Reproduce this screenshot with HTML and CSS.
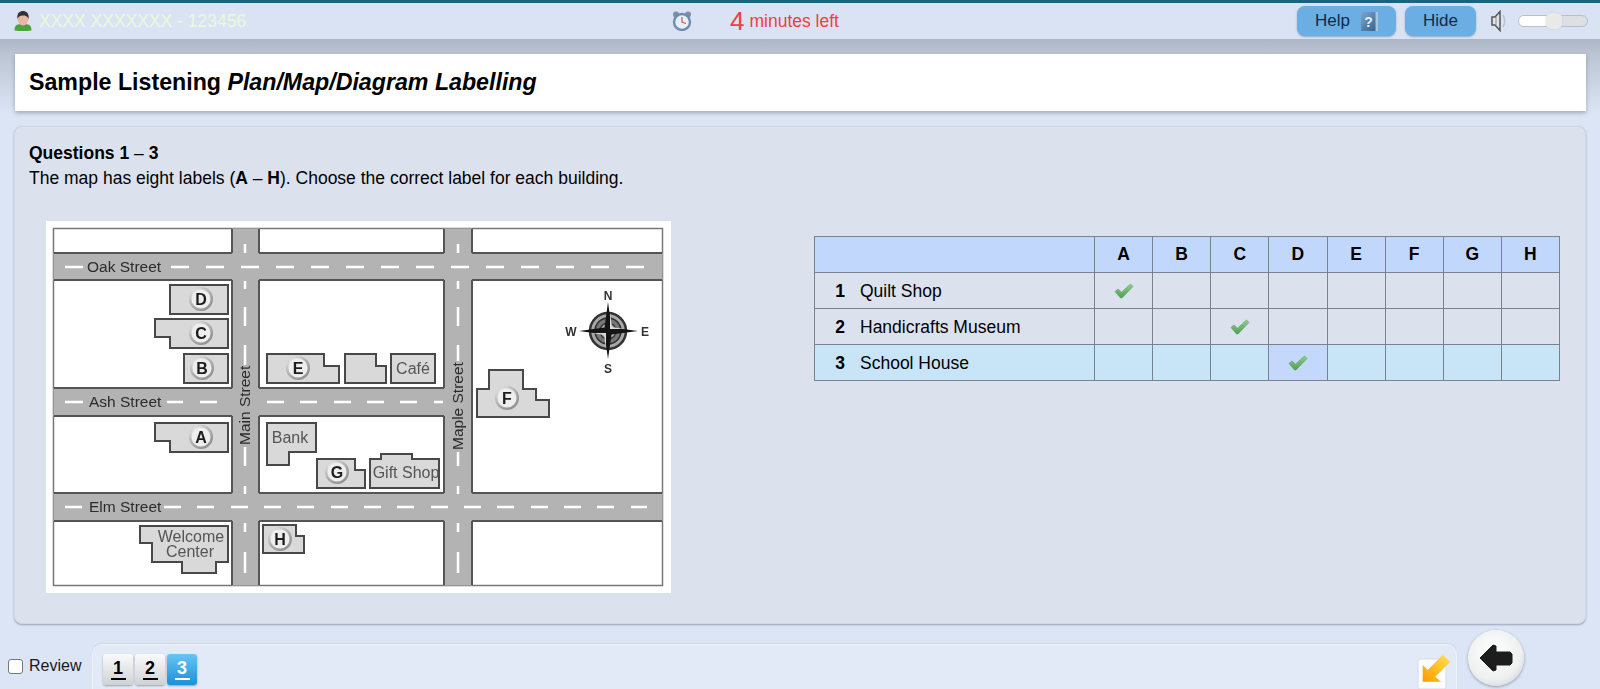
FILE: index.html
```html
<!DOCTYPE html>
<html lang="en">
<head>
<meta charset="utf-8">
<title>Sample Listening</title>
<link rel="stylesheet" href="styles.css">
</head>
<body>
<svg class="defs" width="0" height="0" aria-hidden="true">
  <defs>
    <radialGradient id="ring" cx="0.35" cy="0.3" r="0.9"><stop offset="0" stop-color="#fafafa"/><stop offset="1" stop-color="#777"/></radialGradient>
    <linearGradient id="tick" x1="0" y1="0" x2="0" y2="1"><stop offset="0" stop-color="#8fd08a"/><stop offset="1" stop-color="#4fa155"/></linearGradient>
    <linearGradient id="book" x1="0" y1="0" x2="1" y2="1"><stop offset="0" stop-color="#7fa6cc"/><stop offset="1" stop-color="#2f5f8e"/></linearGradient>
    <linearGradient id="pen" x1="1" y1="0" x2="0" y2="1"><stop offset="0" stop-color="#ffe34d"/><stop offset="1" stop-color="#ff9a00"/></linearGradient>
    <symbol id="check" viewBox="0 0 20 16"><path d="M1 8.500 4 6 7.500 9.200 16.500 1 19 3.500 8 15 6.500 15Z" fill="url(#tick)" stroke="#5c9a62" stroke-width=".6"/></symbol>
  </defs>
</svg>

<header class="topbar">
  <div class="user">
    <svg class="user-icon" viewBox="0 0 18 20"><path d="M0.500 19.500c0-6 3-6.500 8.500-6.500s8.500 .5 8.500 6.500q-8.500 1-17 0Z" fill="#4ba23a"/><ellipse cx="9" cy="8" rx="5.500" ry="6.500" fill="#e6b8a2"/><path d="M3.500 8C2.500 2 6 0 9 0S15.500 2 14.500 8C13.500 5 11 4.500 9 4.500S4.500 5 3.500 8Z" fill="#333"/></svg>
    <span>XXXX XXXXXXX - 123456</span>
  </div>
  <div class="timer">
    <svg class="clock" viewBox="0 0 20 20"><circle cx="4" cy="3.500" r="3" fill="#7e8fa8"/><circle cx="16" cy="3.500" r="3" fill="#7e8fa8"/><circle cx="10" cy="11" r="8" fill="#e6eef8" stroke="#6f8bb0" stroke-width="2.400"/><path d="M10 6V11L14 12.500" fill="none" stroke="#d9534f" stroke-width="1.200"/></svg>
    <span class="timer-num">4</span>
    <span class="timer-text">minutes left</span>
  </div>
  <div class="controls">
    <button class="tool-btn help-btn" type="button">Help
      <svg class="help-icon" viewBox="0 0 17 19"><rect width="17" height="19" fill="url(#book)"/><rect x="14.500" width="2.500" height="19" fill="#a9c4de"/><text x="7.500" y="15" class="help-mark">?</text></svg>
    </button>
    <button class="tool-btn hide-btn" type="button">Hide</button>
    <svg class="speaker" viewBox="0 0 18 22"><path d="M2 7H5L10 1.500V20.500L5 15H2Z" fill="#e2e5ea" stroke="#555" stroke-width="1.500"/><path d="M6 7V15" stroke="#888"/><path d="M13 5q3.500 6 0 12" fill="none" stroke="#bfc4cc" stroke-width="1.500"/></svg>
    <div class="slider"><span class="slider-fill"></span><span class="slider-thumb"></span></div>
  </div>
</header>

<main class="main">
  <h1 class="title">Sample Listening <em>Plan/Map/Diagram Labelling</em></h1>

  <section class="panel">
    <p class="q-head">Questions 1 <span class="thin">–</span> 3</p>
    <p class="q-text">The map has eight labels (<b>A</b> – <b>H</b>). Choose the correct label for each building.</p>
    <div class="q-body">
      <svg class="map" viewBox="0 0 625 372" width="625" height="372">
        <rect class="paper" width="625" height="372"/>
        <rect class="frame" x="7.500" y="7.500" width="609" height="357"/>
        <g class="road">
          <rect x="7.500" y="32" width="609" height="27"/>
          <rect x="7.500" y="167" width="392" height="28"/>
          <rect x="7.500" y="272" width="609" height="28"/>
          <rect x="186" y="7.500" width="27" height="357"/>
          <rect x="398" y="7.500" width="28" height="357"/>
        </g>
        <path class="edge" d="M8 32H186M213 32H398M426 32H616M8 59H186M213 59H398M426 59H616M8 167H186M213 167H398M8 195H186M213 195H398M8 272H186M213 272H398M426 272H616M8 300H186M213 300H398M426 300H616M186 8V32M186 59V167M186 195V272M186 300V364M213 8V32M213 59V167M213 195V272M213 300V364M398 8V32M398 59V167M398 195V272M398 300V364M426 8V32M426 59V272M426 300V364"/>
        <path class="dash" d="M19 46H37M125 46H143M160 46H178M195 46H213M230 46H248M265 46H283M300 46H318M335 46H353M370 46H388M405 46H423M440 46H458M475 46H493M510 46H528M545 46H563M580 46H598"/>
        <path class="dash" d="M19 181H37M121 181H137M154 181H171M221 181H238M254 181H271M288 181H305M321 181H338M354 181H371M388 181H397"/>
        <path class="dash" d="M19 286H36M118 286H135M151 286H168M185 286H202M218 286H235M251 286H268M285 286H302M318 286H335M351 286H368M385 286H402M418 286H435M451 286H468M485 286H502M518 286H535M551 286H568M585 286H601"/>
        <path class="dash" d="M199 23V32M199 60V68M199 86V105M199 124V144M199 226V245M199 265V273M199 302V311M199 331V352"/>
        <path class="dash" d="M412 23V32M412 60V68M412 86V105M412 124V140M412 231V245M412 265V273M412 302V311M412 331V352"/>
        <g class="street">
          <text x="41" y="51">Oak Street</text>
          <text x="43" y="186">Ash Street</text>
          <text x="43" y="291">Elm Street</text>
          <text x="204" y="224" transform="rotate(-90 204 224)">Main Street</text>
          <text x="417" y="229" transform="rotate(-90 417 229)">Maple Street</text>
        </g>
        <g class="bldg">
          <path d="M124 64H182V93H124Z"/>
          <path d="M109 98H182V127H124V116H109Z"/>
          <path d="M138 133H182V162H138Z"/>
          <path d="M221 133H278V145H293V162H221Z"/>
          <path d="M299 133H330V145H340V162H299Z"/>
          <path d="M345 133H389V162H345Z"/>
          <path d="M443 149H477V168H490V179H503V196H431V168H443Z"/>
          <path d="M109 202H182V231H124V220H109Z"/>
          <path d="M221 202H270V231H243V244H221Z"/>
          <path d="M271 238H309V249H319V267H271Z"/>
          <path d="M324 238H335V233H366V238H393V267H324Z"/>
          <path d="M94 305H182V341H170V352H136V341H106V322H94Z"/>
          <path d="M217 304H250V315H258V332H217Z"/>
        </g>
        <g class="bname">
          <text x="367" y="153">Café</text>
          <text x="244" y="222">Bank</text>
          <text x="360" y="257">Gift Shop</text>
          <text x="145" y="321">Welcome</text>
          <text x="144" y="336">Center</text>
        </g>
        <g class="pins">
          <circle cx="155" cy="78" r="12"/><circle cx="155" cy="112" r="12"/><circle cx="156" cy="147" r="12"/><circle cx="252" cy="147" r="12"/><circle cx="461" cy="177" r="12"/><circle cx="155" cy="216" r="12"/><circle cx="291" cy="251" r="12"/><circle cx="234" cy="318" r="12"/>
        </g>
        <g class="pins-in">
          <circle cx="155" cy="78" r="9.500"/><circle cx="155" cy="112" r="9.500"/><circle cx="156" cy="147" r="9.500"/><circle cx="252" cy="147" r="9.500"/><circle cx="461" cy="177" r="9.500"/><circle cx="155" cy="216" r="9.500"/><circle cx="291" cy="251" r="9.500"/><circle cx="234" cy="318" r="9.500"/>
        </g>
        <g class="pin-label">
          <text x="155" y="84">D</text><text x="155" y="118">C</text><text x="156" y="153">B</text><text x="252" y="153">E</text><text x="461" y="183">F</text><text x="155" y="222">A</text><text x="291" y="257">G</text><text x="234" y="324">H</text>
        </g>
        <g class="compass">
          <circle class="c-disc" cx="562" cy="110" r="18"/>
          <circle class="c-ring" cx="562" cy="110" r="13"/>
          <circle class="c-ring2" cx="562" cy="110" r="8"/>
          <path class="c-star" d="M562 81 565.500 106.500 592 110 565.500 113.500 562 138 558.500 113.500 533 110 558.500 106.500Z"/>
          <path class="c-light" d="M564 108V92L566 106 578 108ZM560 112V128L558 114 546 112Z"/>
          <text x="562" y="78.500">N</text>
          <text x="562" y="151.500">S</text>
          <text x="525" y="114.500">W</text>
          <text x="599" y="114.500">E</text>
        </g>
      </svg>

      <table class="grid">
        <thead>
          <tr><th class="name-col"></th><th>A</th><th>B</th><th>C</th><th>D</th><th>E</th><th>F</th><th>G</th><th>H</th></tr>
        </thead>
        <tbody>
          <tr>
            <td class="name-col"><b>1</b>Quilt Shop</td>
            <td><svg class="tick"><use href="#check"/></svg></td><td></td><td></td><td></td><td></td><td></td><td></td><td></td>
          </tr>
          <tr>
            <td class="name-col"><b>2</b>Handicrafts Museum</td>
            <td></td><td></td><td><svg class="tick"><use href="#check"/></svg></td><td></td><td></td><td></td><td></td><td></td>
          </tr>
          <tr class="current">
            <td class="name-col"><b>3</b>School House</td>
            <td></td><td></td><td></td><td class="picked"><svg class="tick"><use href="#check"/></svg></td><td></td><td></td><td></td><td></td>
          </tr>
        </tbody>
      </table>
    </div>
  </section>

  <footer class="bottom">
    <label class="review"><span class="box"></span>Review</label>
    <nav class="nav">
      <a class="num"><span>1</span></a>
      <a class="num"><span>2</span></a>
      <a class="num on"><span>3</span></a>
      <svg class="pencil" viewBox="0 0 34 35"><rect x="1" y="5" width="28" height="30" rx="2" fill="#fbfcfd" stroke="#d5dbe5"/><path d="M25.700 1 33.300 7.700 18.300 22.700 24 27.700H5.700V11L10.700 16Z" fill="url(#pen)"/></svg>
    </nav>
    <button class="back" type="button" aria-label="Back">
      <svg viewBox="0 0 34 30" class="back-arrow"><path d="M1 15 14 2 17 3 17 9 31 9 33 11 33 20 31 22 17 22 17 27 14 28Z" fill="#1d1d1d" stroke="#1d1d1d" stroke-linejoin="round"/></svg>
    </button>
  </footer>
</main>
</body>
</html>
```
FILE: styles.css
```css
* { box-sizing: border-box; }
html, body { margin: 0; height: 689px; overflow: hidden; }
body {
  background: #dce5f5;
  font-family: "Liberation Sans", Arial, sans-serif;
  color: #000;
}
.defs { position: absolute; }

/* top bar */
.topbar {
  height: 39px;
  border-top: 3px solid #1b6180;
  background: #dae3f4;
  display: flex;
  align-items: center;
}
.user {
  width: 672px;
  padding-left: 14px;
  display: flex;
  align-items: center;
  gap: 7px;
  font-size: 17.5px;
  color: #e6fbdc;
}
.user-icon { width: 18px; height: 20px; }
.timer { display: flex; align-items: center; color: #ee3f42; }
.clock { width: 20px; height: 20px; margin-right: 38px; }
.timer-num { font-size: 26px; line-height: 30px; margin-right: 5px; }
.timer-text { font-size: 17.5px; }
.controls { margin-left: auto; display: flex; align-items: center; padding-right: 12px; }
.tool-btn {
  height: 30px;
  border: 0;
  border-radius: 8px;
  background: #6aaee4;
  box-shadow: 0 1px 2px #8ea6c4;
  color: #0f2a4a;
  font: 17px "Liberation Sans", Arial, sans-serif;
  display: flex;
  align-items: center;
  justify-content: center;
  padding: 0;
}
.help-btn { width: 99px; gap: 11px; margin-right: 9px; }
.hide-btn { width: 71px; margin-right: 14px; }
.help-icon { width: 17px; height: 19px; }
.help-mark { font: bold 14px "Liberation Sans", Arial, sans-serif; fill: #e8f1fa; text-anchor: middle; }
.speaker { width: 18px; height: 22px; margin-right: 10px; }
.slider {
  position: relative;
  width: 70px;
  height: 12px;
  border: 1px solid #b9bfc8;
  border-radius: 6px;
  background: #dcdfe3;
}
.slider-fill {
  display: block;
  width: 30px;
  height: 100%;
  background: #fff;
  border-radius: 6px 0 0 6px;
}
.slider-thumb {
  position: absolute;
  left: 27px;
  top: -3px;
  width: 16px;
  height: 16px;
  border-radius: 5px;
  background: #e8e9e8;
  box-shadow: 0 0 2px #c4c8cc;
}

/* main column */
.main {
  padding-top: 15px;
  background: linear-gradient(#aeb6c4 0, #bcc5d4 16px, #dce5f5 75px);
  background-repeat: no-repeat;
}
.title {
  margin: 0 14px 15px 15px;
  height: 57px;
  padding-left: 14px;
  background: #fff;
  box-shadow: 0 2px 4px rgba(90, 100, 125, .45);
  font-size: 23.2px;
  font-weight: bold;
  line-height: 56px;
}
.panel {
  margin: 0 14px;
  height: 498px;
  padding: 14px 14px 0;
  background: #dce2ed;
  border: 1px solid #d2d9e6;
  border-radius: 8px;
  box-shadow: 0 1px 2px rgba(100, 110, 130, .55);
}
.q-head, .q-text { margin: 0; font-size: 17.5px; line-height: 24px; }
.q-head { font-weight: bold; }
.q-text { margin-top: 1px; }
.thin { font-weight: normal; }
.q-body { display: flex; align-items: flex-start; margin-top: 31px; padding-left: 17px; }

/* map */
.map { display: block; flex: none; filter: blur(.35px); }
.paper { fill: #fff; }
.frame { fill: #fff; stroke: #777; stroke-width: 1.5; }
.road rect { fill: #b3b3b3; }
.edge { fill: none; stroke: #555; stroke-width: 2; }
.dash { fill: none; stroke: #fff; stroke-width: 2.5; }
.street text { font-size: 15.5px; fill: #2b2b2b; }
.bldg path { fill: #d9d9d9; stroke: #484848; stroke-width: 2; }
.bname text { font-size: 16px; fill: #555; text-anchor: middle; }
.pins circle { fill: url(#ring); }
.pins-in circle { fill: #eeeeee; }
.pin-label text { font-size: 16px; font-weight: bold; fill: #1c1c1c; text-anchor: middle; }
.c-disc { fill: #a8a8a8; stroke: #333; stroke-width: 2.5; }
.c-ring { fill: #777; stroke: #2f2f2f; stroke-width: 1.5; }
.c-ring2 { fill: #b5b5b5; stroke: #333; stroke-width: 1.5; }
.c-star { fill: #141414; }
.c-light { fill: #dcdcdc; }
.compass text { font-size: 12px; font-weight: bold; fill: #333; text-anchor: middle; }

/* table */
.grid {
  flex: none;
  width: 746px;
  margin: 15px 0 0 143px;
  border-collapse: collapse;
  table-layout: fixed;
  font-size: 17.5px;
}
.grid th, .grid td {
  height: 36px;
  padding: 0;
  border: 1px solid #79828f;
  text-align: center;
  vertical-align: middle;
}
.grid th { background: #c2d7fc; font-weight: bold; }
.grid .name-col { width: 280px; text-align: left; }
.grid td.name-col { padding-top: 2px; }
.grid td.name-col b { display: inline-block; width: 45px; padding-right: 15px; text-align: right; }
.current td { background: #c7e5f7; }
.current td.picked { background: #c4d8fb; }
.tick { display: block; width: 20px; height: 16px; margin: 1px auto 0; }

/* bottom */
.bottom { display: flex; align-items: flex-start; height: 65px; }
.review {
  display: flex;
  align-items: center;
  width: 92px;
  padding: 33px 0 0 8px;
  font-size: 16px;
  color: #1a1a1a;
}
.box {
  width: 15px;
  height: 15px;
  margin-right: 6px;
  background: #fff;
  border: 1px solid #767676;
  border-radius: 3px;
}
.nav {
  flex: none;
  width: 1365px;
  height: 60px;
  margin-top: 20px;
  padding: 9px 5px 0 10px;
  display: flex;
  align-items: flex-start;
  gap: 2px;
  background: #e3eaf7;
  border: 1px solid #eef2fa;
  border-radius: 10px 10px 0 0;
  box-shadow: 0 -1px 1px #cdd5e3;
}
.num {
  width: 30px;
  height: 31px;
  padding-top: 5px;
  border-radius: 3px;
  background: linear-gradient(#fbfbfb, #cfd2d4);
  box-shadow: 0 1px 2px #97a0ad;
  font-size: 18px;
  font-weight: bold;
  line-height: 19px;
  text-align: center;
  color: #000;
}
.num span { display: block; width: 15px; margin: 0 auto; border-bottom: 2px solid currentColor; }
.num.on { background: linear-gradient(#68c5f2, #1a91d9); color: #fff; }
.pencil { width: 34px; height: 35px; margin-left: auto; }
.back {
  width: 56px;
  height: 56px;
  margin: 6px 0 0 11px;
  padding: 0;
  border: 0;
  border-radius: 50%;
  background: radial-gradient(circle at 45% 40%, #fff 0, #eef0f0 60%, #bfc6cb 100%);
  box-shadow: 0 1px 3px #8e99a8;
  display: flex;
  align-items: center;
  justify-content: center;
}
.back-arrow { width: 34px; height: 30px; }
```
